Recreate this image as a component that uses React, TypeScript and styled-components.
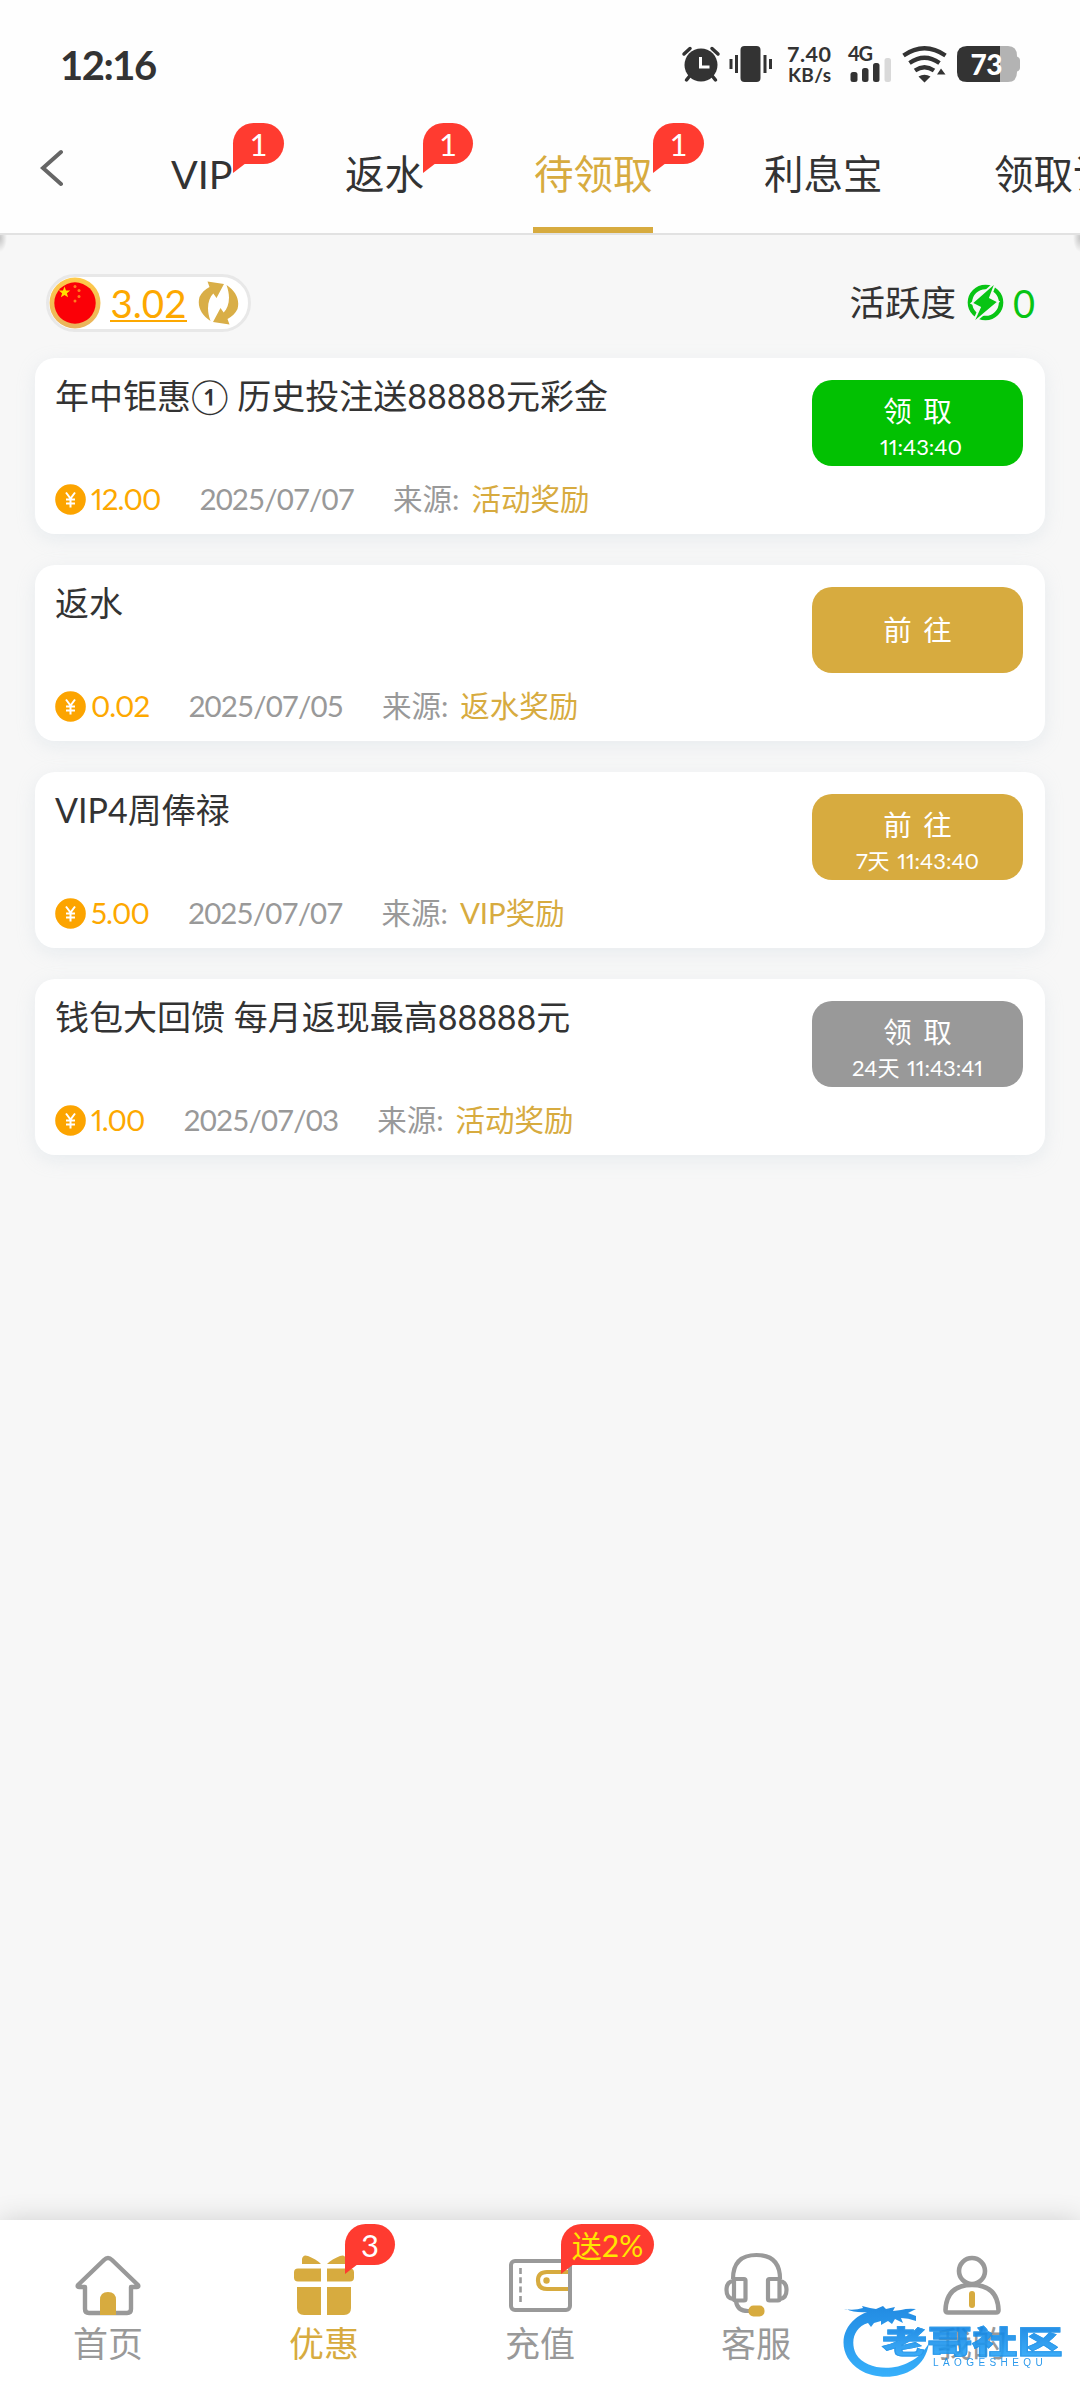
import React from "react";
import styled, { createGlobalStyle } from "styled-components";

const GOLD = "#d7ab3f";
const GREY = "#999999";
const ORANGE = "#fda800";
const GREEN = "#08c414";

const Global = createGlobalStyle`
  body { margin: 0; background: #f7f7f7; }
  * { box-sizing: border-box; }
`;

const Screen = styled.div`
  width: 1080px;
  height: 2400px;
  display: flex;
  flex-direction: column;
  overflow: hidden;
  position: relative;
  background: #f7f7f7;
  color: #333;
  font-family: Lato, "Noto Sans CJK SC", sans-serif;
  white-space: nowrap;
`;

const Header = styled.header`
  flex: none;
  height: 235px;
  background: #fefefe;
  border-bottom: 2px solid #e2e2e2;
  display: flex;
  flex-direction: column;
`;

const StatusBar = styled.div`
  height: 115px;
  padding: 14px 60px 0 60px;
  display: flex;
  align-items: center;
`;

const Clock = styled.span`
  font-size: 40px;
  line-height: 50px;
  font-weight: 700;
  letter-spacing: -1.5px;
  margin-right: auto;
`;

const StatusIcons = styled.svg`
  display: block;
`;

const TabRow = styled.nav`
  height: 118px;
  display: flex;
  padding-left: 40px;
  overflow: hidden;
`;

const Back = styled.svg`
  flex: none;
  margin: 34px 106px 0 0;
`;

const Tabs = styled.div`
  display: flex;
  gap: 110px;
`;

const Tab = styled.div<{ $active?: boolean; $width?: number }>`
  position: relative;
  flex: none;
  width: ${(p) => (p.$width ? `${p.$width}px` : "auto")};
  height: 118px;
  font-size: 39.5px;
  line-height: 118px;
  text-indent: 1px;
  color: ${(p) => (p.$active ? GOLD : "#333")};
  border-bottom: 6px solid ${(p) => (p.$active ? GOLD : "transparent")};
`;

const Bubble = styled.span<{ $left: number; $top: number; $width: number; $color?: string; $size?: number }>`
  position: absolute;
  left: ${(p) => p.$left}px;
  top: ${(p) => p.$top}px;
  width: ${(p) => p.$width}px;
  height: 41px;
  border-radius: 21px 21px 21px 0;
  background: #ff3b30;
  color: ${(p) => p.$color || "#fff"};
  font-size: ${(p) => p.$size || 31}px;
  line-height: 42px;
  text-align: center;
  text-indent: 0;
  &::after {
    content: "";
    position: absolute;
    left: 0;
    top: 40px;
    border-top: 10px solid #ff3b30;
    border-right: 13px solid transparent;
  }
`;

const Summary = styled.div`
  height: 123px;
  flex: none;
  padding: 12px 45px 0 46px;
  display: flex;
  align-items: center;
  justify-content: space-between;
  background:
    radial-gradient(ellipse 7px 14px at 0 3px, rgba(0, 0, 0, 0.2), transparent),
    radial-gradient(ellipse 7px 14px at 100% 3px, rgba(0, 0, 0, 0.2), transparent);
`;

const Wallet = styled.div`
  width: 205px;
  height: 58px;
  border: 3px solid #e8e8e8;
  border-radius: 29px;
  background: #fff;
  display: flex;
  align-items: center;
`;

const Balance = styled.span`
  margin: 0 11px 0 9px;
  width: 77px;
  height: 39px;
  font-size: 38.5px;
  line-height: 40px;
  text-align: center;
  color: ${ORANGE};
  border-bottom: 2px solid ${ORANGE};
`;

const Activity = styled.div`
  display: flex;
  align-items: center;
  font-size: 35.5px;
  line-height: 40px;
`;

const ActivityIcon = styled.svg`
  margin: 0 9px 0 11px;
`;

const ActivityScore = styled.span`
  color: ${GREEN};
  font-size: 38px;
`;

const List = styled.main`
  flex: 1;
  padding: 0 35px;
  display: flex;
  flex-direction: column;
  gap: 31px;
`;

const Card = styled.article`
  height: 176px;
  flex: none;
  padding: 22px 22px 0 20px;
  border-radius: 20px;
  background: #fff;
  box-shadow: 0 5px 18px rgba(190, 205, 215, 0.26);
  display: flex;
  justify-content: space-between;
`;

const CardBody = styled.div`
  display: flex;
  flex-direction: column;
`;

const Title = styled.h2`
  margin: 0;
  height: 102px;
  font-size: 34px;
  font-weight: 400;
  line-height: 32px;
`;

const Meta = styled.div`
  display: flex;
  align-items: center;
  height: 34px;
  font-size: 29.5px;
  line-height: 34px;
  color: ${GREY};
`;

const Amount = styled.span`
  margin: 0 39px 0 5px;
  color: ${ORANGE};
  font-variant-numeric: proportional-nums;
  letter-spacing: -0.9px;
`;

const DateText = styled.span`
  margin-right: 39px;
  letter-spacing: -0.9px;
`;

const Source = styled.span`
  margin-left: 12px;
  color: ${GOLD};
`;

const Action = styled.button<{ $color: string; $timed: boolean }>`
  width: 211px;
  height: 86px;
  padding: ${(p) => (p.$timed ? 8 : 0)}px 0 0;
  border: 0;
  border-radius: 20px;
  background: ${(p) => p.$color};
  color: #fff;
  font-family: inherit;
  display: flex;
  flex-direction: column;
  align-items: center;
  justify-content: center;
  gap: 5px;
`;

const ActionLabel = styled.span`
  font-size: 28.5px;
  line-height: 34px;
  word-spacing: 4px;
`;

const Countdown = styled.span<{ $shift?: boolean }>`
  font-size: 22px;
  line-height: 28px;
  padding-left: ${(p) => (p.$shift ? 7 : 0)}px;
  font-variant-numeric: proportional-nums;
  word-spacing: 2px;
`;

const NavBar = styled.footer`
  flex: none;
  height: 180px;
  display: grid;
  grid-template-columns: repeat(5, 1fr);
  background: #fff;
  box-shadow: 0 0 26px rgba(0, 0, 0, 0.16);
`;

const NavItem = styled.div<{ $active?: boolean }>`
  position: relative;
  display: flex;
  flex-direction: column;
  align-items: center;
  padding-top: 30px;
  font-size: 35px;
  line-height: 46px;
  color: ${(p) => (p.$active ? GOLD : GREY)};
  svg { display: block; }
`;

const Watermark = styled.div`
  position: absolute;
  left: 836px;
  top: 2290px;
  opacity: 0.9;
`;

const WatermarkText = styled.span`
  position: absolute;
  left: 46px;
  top: 32px;
  font-size: 30.5px;
  line-height: 38px;
  font-weight: 900;
  transform: scaleX(1.48);
  transform-origin: left;
  color: transparent;
  -webkit-text-stroke: 0.9px #178fe8;
  background: linear-gradient(#0a7de0, #2ba8fa);
  -webkit-background-clip: text;
  background-clip: text;
`;

const WatermarkLatin = styled.span`
  position: absolute;
  left: 97px;
  top: 67px;
  font: 400 10px/12px "Liberation Sans", sans-serif;
  letter-spacing: 4.4px;
  color: #1790ea;
`;

const dark = "#333";

function StatusGlyphs() {
  return (
    <StatusIcons width="342" height="44" viewBox="678 43 342 44">
      <g fill={dark} stroke={dark}>
        <circle cx="701" cy="65" r="16.5" stroke="none" />
        <path d="M684 54l6-5.500M718 54l-6-5.500M686.500 80l4-5M715.500 80l-4-5" strokeWidth="3.500" strokeLinecap="round" fill="none" />
        <path d="M700.500 57v10h9" stroke="#fff" strokeWidth="3" fill="none" />
        <rect x="740.500" y="46" width="20" height="36" rx="4" stroke="none" />
        <path d="M736.500 55v18M765 55v18M731 59v10M770.500 59v10" strokeWidth="3" fill="none" />
      </g>
      <g fill={dark} fontFamily="Lato" fontWeight="700">
        <text x="787" y="62" fontSize="21.500" textLength="44">7.40</text>
        <text x="788" y="82" fontSize="19" textLength="43">KB/s</text>
        <text x="848" y="61" fontSize="20" textLength="25">4G</text>
      </g>
      <g fill={dark}>
        <rect x="850.500" y="72" width="7" height="10" rx="2.500" />
        <rect x="862" y="68" width="6.500" height="14" rx="2.500" />
        <rect x="873" y="63" width="6.500" height="19" rx="2.500" />
        <rect x="884.500" y="58" width="6.500" height="24" rx="2.500" fill="#d9d9d9" />
      </g>
      <g fill="none" stroke={dark} strokeWidth="4.200">
        <path d="M903.500 55.500Q924.500 41 945.500 55.500" />
        <path d="M909.500 63Q924.500 52.500 939.500 63" />
        <path d="M915 70.500Q924.500 64 934 70.500" />
      </g>
      <path d="M918.500 76.500q6-3.500 12 0l-6 6zM937 74.500l4-6 4.500 6z" fill={dark} />
      <path d="M967 46h33v36h-33q-10 0-10-10V56q0-10 10-10z" fill={dark} />
      <path d="M1000 46h8q9 0 9 10v.500q3 1 3 4v7q0 3-3 4v.500q0 10-9 10h-8z" fill="#b3b3b3" />
      <text x="970.500" y="74.500" fontSize="28" fontFamily="Lato" fontWeight="900" fill="#fff" textLength="32">73</text>
    </StatusIcons>
  );
}

function FlagCoin() {
  return (
    <svg width="52" height="52" viewBox="0 0 52 52">
      <defs>
        <linearGradient id="ring" x1="0" y1="0" x2="0" y2="1">
          <stop offset="0" stopColor="#ffcb4a" />
          <stop offset="1" stopColor="#e9b35c" />
        </linearGradient>
      </defs>
      <circle cx="26" cy="26" r="25.500" fill="url(#ring)" />
      <circle cx="26" cy="26" r="20.700" fill="#fb0007" />
      <path d="M15.500 9.500l1.500 4 4.200.1-3.300 2.600 1.200 4.100-3.600-2.400-3.600 2.400 1.200-4.100-3.300-2.600 4.200-.1z" fill="#ffe000" />
      <g fill="#ff7d1e">
        <circle cx="26" cy="9.500" r="1.500" />
        <circle cx="30" cy="13.500" r="1.500" />
        <circle cx="30" cy="19.500" r="1.500" />
        <circle cx="26" cy="24" r="1.500" />
      </g>
    </svg>
  );
}

const refreshArrow =
  "M9.500 0.500l16.500 2.500-7.500 14-3.200-4.500C10 18 8 28 12.500 40 3 34-1 25 1.500 16 3.500 11.500 7 8.500 11.500 6z";

function Refresh() {
  return (
    <svg width="41" height="44" viewBox="0 0 41 44">
      <g fill="#d9ae47">
        <path d={refreshArrow} />
        <path d={refreshArrow} transform="rotate(180 20.500 22)" />
      </g>
    </svg>
  );
}

function Coin() {
  return (
    <svg width="31" height="31" viewBox="0 0 31 31">
      <circle cx="15.500" cy="15.500" r="15.300" fill="#fca400" />
      <path d="M11 8.500l4.500 6 4.500-6M15.500 14.500v9M11 15.500h9M11 19.500h9" stroke="#fff" strokeWidth="2" fill="none" />
    </svg>
  );
}

const HomeIcon = () => (
  <svg width="72" height="70" viewBox="72 2250 72 70">
    <path d="M108 2258q-2 0-4 2l-26 25q-1 2 1 2h6v22q0 4 4 4h38q4 0 4-4v-22h6q2 0 1-2l-26-25q-2-2-4-2z" fill="none" stroke={GREY} strokeWidth="4.400" strokeLinejoin="round" />
    <path d="M100 2315v-15q0-8 8-8t8 8v15z" fill={GOLD} />
  </svg>
);

const GiftIcon = () => (
  <svg width="72" height="70" viewBox="288 2250 72 70">
    <g fill={GOLD}>
      <path d="M302 2264v-5q1-5 6-3 8 3 13 8zM346 2264v-5q-1-5-6-3-8 3-13 8z" />
      <path d="M298 2268.500h23v13h-23q-4 0-4-4v-5q0-4 4-4zM327 2268.500h23q4 0 4 4v5q0 4-4 4h-23z" />
      <path d="M297 2287h24v28h-17q-7 0-7-7zM327 2287h24v21q0 7-7 7h-17z" />
    </g>
  </svg>
);

const PurseIcon = () => (
  <svg width="72" height="70" viewBox="504 2250 72 70">
    <rect x="511" y="2261" width="59" height="49" rx="4" fill="none" stroke={GREY} strokeWidth="4" />
    <path d="M520.500 2268v34" stroke={GREY} strokeWidth="2.600" strokeDasharray="6 3.300" />
    <path d="M568 2272h-21q-9 0-9 8.500t9 8.500h21" fill="none" stroke={GOLD} strokeWidth="4.200" />
    <circle cx="546.500" cy="2280.500" r="3.200" fill={GOLD} />
  </svg>
);

const HeadsetIcon = () => (
  <svg width="72" height="70" viewBox="720 2250 72 70">
    <g fill="none" stroke={GREY} strokeWidth="4.200">
      <path d="M733 2279q0-24 23.500-24t23.500 24" />
      <rect x="734" y="2279" width="11.500" height="21.500" rx="1.500" />
      <rect x="768" y="2279" width="11.500" height="21.500" rx="1.500" />
      <path d="M733 2281q-6.500 1-6.500 9t6.500 9M780 2281q6.500 1 6.500 9t-6.500 9" />
      <path d="M736 2301q1 10 12 10h3" />
    </g>
    <rect x="748.500" y="2305.500" width="16" height="11" rx="5" fill={GOLD} />
  </svg>
);

const PersonIcon = () => (
  <svg width="72" height="70" viewBox="936 2250 72 70">
    <g fill="none" stroke={GREY} strokeWidth="4.600">
      <circle cx="972" cy="2271" r="13" />
      <path d="M945.500 2310q1-25 26.500-25t26.500 25q0 2.500-2.500 2.500h-48q-2.500 0-2.500-2.500z" />
    </g>
    <path d="M972 2294v11" stroke={GOLD} strokeWidth="6" strokeLinecap="round" />
  </svg>
);

type Reward = {
  title: string;
  amount: string;
  date: string;
  source: string;
  label: string;
  color: string;
  time?: string;
  shift?: boolean;
};

const rewards: Reward[] = [
  { title: "年中钜惠① 历史投注送88888元彩金", amount: "12.00", date: "2025/07/07", source: "活动奖励", label: "领 取", color: "#02c102", time: "11:43:40", shift: true },
  { title: "返水", amount: "0.02", date: "2025/07/05", source: "返水奖励", label: "前 往", color: GOLD },
  { title: "VIP4周俸禄", amount: "5.00", date: "2025/07/07", source: "VIP奖励", label: "前 往", color: GOLD, time: "7天 11:43:40" },
  { title: "钱包大回馈 每月返现最高88888元", amount: "1.00", date: "2025/07/03", source: "活动奖励", label: "领 取", color: GREY, time: "24天 11:43:41" },
];

export default function App() {
  return (
    <Screen>
      <Global />
      <Header>
        <StatusBar>
          <Clock>12:16</Clock>
          <StatusGlyphs />
        </StatusBar>
        <TabRow>
          <Back width="24" height="38" viewBox="0 0 24 38">
            <path d="M21 3L3 19l18 16" fill="none" stroke="#666" strokeWidth="4" strokeLinecap="round" />
          </Back>
          <Tabs>
            <Tab $width={64}>VIP<Bubble $left={63} $top={8} $width={51}>1</Bubble></Tab>
            <Tab $width={79}>返水<Bubble $left={79} $top={8} $width={50}>1</Bubble></Tab>
            <Tab $active $width={120}>待领取<Bubble $left={120} $top={8} $width={51}>1</Bubble></Tab>
            <Tab $width={120}>利息宝</Tab>
            <Tab>领取记录</Tab>
          </Tabs>
        </TabRow>
      </Header>
      <Summary>
        <Wallet>
          <FlagCoin />
          <Balance>3.02</Balance>
          <Refresh />
        </Wallet>
        <Activity>
          活跃度
          <ActivityIcon width="37" height="37" viewBox="0 0 38 38">
            <circle cx="19" cy="19" r="16" fill="none" stroke={GREEN} strokeWidth="4.600" />
            <path d="M27.500 1L6.500 19.500l8 4-6 13.500 22-18.500-8-4z" fill={GREEN} stroke="#f7f7f7" strokeWidth="4" paintOrder="stroke" />
          </ActivityIcon>
          <ActivityScore>0</ActivityScore>
        </Activity>
      </Summary>
      <List>
        {rewards.map((r) => (
          <Card key={r.title}>
            <CardBody>
              <Title>{r.title}</Title>
              <Meta>
                <Coin />
                <Amount>{r.amount}</Amount>
                <DateText>{r.date}</DateText>
                来源:<Source>{r.source}</Source>
              </Meta>
            </CardBody>
            <Action $color={r.color} $timed={!!r.time}>
              <ActionLabel>{r.label}</ActionLabel>
              {r.time && <Countdown $shift={r.shift}>{r.time}</Countdown>}
            </Action>
          </Card>
        ))}
      </List>
      <NavBar>
        <NavItem><HomeIcon />首页</NavItem>
        <NavItem $active><GiftIcon />优惠<Bubble $left={129} $top={4} $width={50}>3</Bubble></NavItem>
        <NavItem><PurseIcon />充值<Bubble $left={129} $top={4} $width={93} $color="#ffe600" $size={30}>送2%</Bubble></NavItem>
        <NavItem><HeadsetIcon />客服</NavItem>
        <NavItem><PersonIcon />我的</NavItem>
      </NavBar>
      <Watermark>
        <svg width="236" height="90" viewBox="836 2290 236 90">
          <defs>
            <linearGradient id="dragon" x1="0" y1="0" x2="0" y2="1">
              <stop offset="0" stopColor="#0b7fe0" />
              <stop offset="1" stopColor="#22a8fb" />
            </linearGradient>
          </defs>
          <path
            d="M842 2309q10 2 19-1l-1-2 8 2 6 1 7-3 3 3 9-2-2 4 8-1q7-2 15-1l-8 4 8 3v5q-8-3-15-3l2 5-8-4-3 5-4-3-7 4 0-4-7 2-3 4-3-4c-14 4-18 19-12 31 12 20 56 20 73-11-5 36-48 40-69 27-20-12-22-37-5-51 3-3 7-5 12-7q-12 1-21-3z"
            fill="url(#dragon)"
            transform="translate(2 0)"
          />
        </svg>
        <WatermarkText>老哥社区</WatermarkText>
        <WatermarkLatin>LAOGESHEQU</WatermarkLatin>
      </Watermark>
    </Screen>
  );
}
